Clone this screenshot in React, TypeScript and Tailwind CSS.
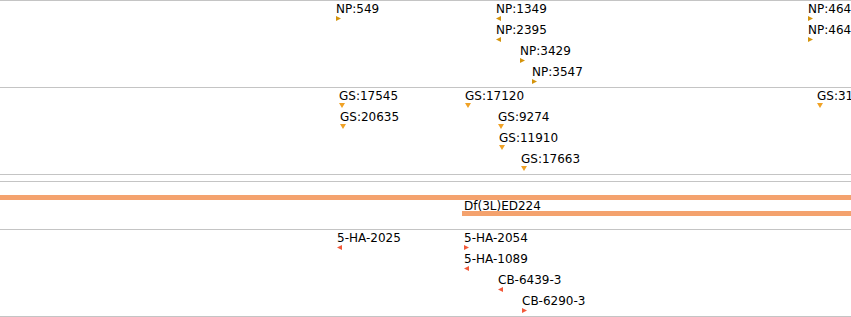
type Dir = 'right' | 'left' | 'down';

interface IFeature {
    label: string;
    x: number;
    row: number;
    dir: Dir;
    color: string;
}

const npFeatures: IFeature[] = [
    { label: 'NP:549', x: 336, row: 0, dir: 'right', color: '#d4940c' },
    { label: 'NP:1349', x: 496, row: 0, dir: 'left', color: '#d4940c' },
    { label: 'NP:2395', x: 496, row: 1, dir: 'left', color: '#d4940c' },
    { label: 'NP:3429', x: 520, row: 2, dir: 'right', color: '#d4940c' },
    { label: 'NP:3547', x: 532, row: 3, dir: 'right', color: '#d4940c' },
    { label: 'NP:464', x: 808, row: 0, dir: 'right', color: '#d4940c' },
    { label: 'NP:464', x: 808, row: 1, dir: 'right', color: '#d4940c' },
];

const gsFeatures: IFeature[] = [
    { label: 'GS:17545', x: 339, row: 0, dir: 'down', color: '#f0a226' },
    { label: 'GS:17120', x: 465, row: 0, dir: 'down', color: '#f0a226' },
    { label: 'GS:20635', x: 340, row: 1, dir: 'down', color: '#f0a226' },
    { label: 'GS:9274', x: 498, row: 1, dir: 'down', color: '#f0a226' },
    { label: 'GS:11910', x: 499, row: 2, dir: 'down', color: '#f0a226' },
    { label: 'GS:17663', x: 521, row: 3, dir: 'down', color: '#f0a226' },
    { label: 'GS:31', x: 817, row: 0, dir: 'down', color: '#f0a226' },
];

const haFeatures: IFeature[] = [
    { label: '5-HA-2025', x: 337, row: 0, dir: 'left', color: '#f25a3a' },
    { label: '5-HA-2054', x: 464, row: 0, dir: 'right', color: '#f25a3a' },
    { label: '5-HA-1089', x: 464, row: 1, dir: 'left', color: '#f25a3a' },
    { label: 'CB-6439-3', x: 498, row: 2, dir: 'left', color: '#f25a3a' },
    { label: 'CB-6290-3', x: 522, row: 3, dir: 'right', color: '#f25a3a' },
];

const Arrow = ({ dir, color }: { dir: Dir; color: string }) => {
    const points = dir === 'right' ? '0,0 5,2.5 0,5' : dir === 'left' ? '5,0 0,2.5 5,5' : '0,0 6,0 3,5';
    return (
        <svg width={dir === 'down' ? 6 : 5} height={5} viewBox={dir === 'down' ? '0 0 6 5' : '0 0 5 5'} className="block">
            <polygon points={points} fill={color} />
        </svg>
    );
}

// features sit on the track canvas at their genomic x, stacked in rows of 21px
const Feature = ({ label, x, row, dir, color }: IFeature) => (
    <div className="absolute flex flex-col items-start" style={{ left: x, top: 1 + row * 21 }}>
        <span className="text-[12px] leading-[14px] text-black whitespace-nowrap">{label}</span>
        <Arrow dir={dir} color={color} />
    </div>
);

const Track = ({ features }: { features: IFeature[] }) => (
    <div className="relative h-[87px] border-b border-[#c4c4c4] overflow-hidden">
        {features.map((f, i) => <Feature key={i} {...f} />)}
    </div>
);

export default function App() {
    return (
        <div className="w-[851px] h-[317px] bg-white overflow-hidden border-t border-[#c4c4c4] flex flex-col" style={{ fontFamily: '"DejaVu Sans", Verdana, sans-serif' }}>
            <Track features={npFeatures} />
            <Track features={gsFeatures} />
            <div className="h-[7px] shrink-0 border-b border-[#c4c4c4]" />
            <div className="h-[48px] shrink-0 border-b border-[#c4c4c4] pt-[13px] flex flex-col overflow-hidden">
                <div className="h-[5px] bg-[#f4a26e]" />
                <div className="ml-[462px] pt-[1px] flex flex-col">
                    <span className="pl-[2px] text-[12px] leading-[10px] text-black whitespace-nowrap">Df(3L)ED224</span>
                    <div className="h-[5px] bg-[#f4a26e]" />
                </div>
            </div>
            <Track features={haFeatures} />
        </div>
    );
}
